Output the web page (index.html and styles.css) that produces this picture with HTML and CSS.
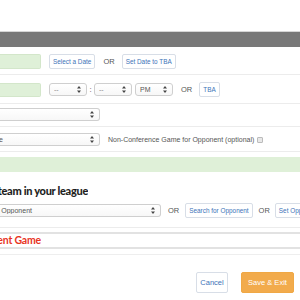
FILE: index.html
```html
<!DOCTYPE html>
<html>
<head>
<meta charset="utf-8">
<link rel="stylesheet" href="styles.css">
</head>
<body>
<div class="page">
  <div class="topbar"></div>

  <div class="row row-date">
    <div class="input green"></div>
    <button class="btn btn-first">Select a Date</button>
    <span class="or">OR</span>
    <button class="btn">Set Date to TBA</button>
  </div>

  <div class="row row-time">
    <div class="input green"></div>
    <div class="select s-time s-first"><span class="val muted">--</span><svg class="arr" width="4" height="7" viewBox="0 0 4 7"><path d="M2 0L4 2.6H0Z M2 7L4 4.4H0Z" fill="#444"/></svg></div>
    <span class="colon">:</span>
    <div class="select s-time"><span class="val muted">--</span><svg class="arr" width="4" height="7" viewBox="0 0 4 7"><path d="M2 0L4 2.6H0Z M2 7L4 4.4H0Z" fill="#444"/></svg></div>
    <div class="select s-time s-gap"><span class="val">PM</span><svg class="arr" width="4" height="7" viewBox="0 0 4 7"><path d="M2 0L4 2.6H0Z M2 7L4 4.4H0Z" fill="#444"/></svg></div>
    <span class="or">OR</span>
    <button class="btn">TBA</button>
  </div>

  <div class="row row-loc">
    <div class="select s-wide"><span class="val"></span><svg class="arr" width="4" height="7" viewBox="0 0 4 7"><path d="M2 0L4 2.6H0Z M2 7L4 4.4H0Z" fill="#444"/></svg></div>
  </div>

  <div class="row row-home">
    <div class="select s-wide"><span class="val cut"><span class="cut-home">Home</span></span><svg class="arr" width="4" height="7" viewBox="0 0 4 7"><path d="M2 0L4 2.6H0Z M2 7L4 4.4H0Z" fill="#444"/></svg></div>
    <span class="note">Non-Conference Game for Opponent (optional)</span>
    <span class="checkbox"></span>
  </div>

  <div class="notice"></div>

  <h3 class="league-title"><span>Opponent is a team in your league</span></h3>

  <div class="row-opp">
    <div class="select s-opp"><span class="val cut"><span class="cut-opp">Select Opponent</span></span><svg class="arr" width="4" height="7" viewBox="0 0 4 7"><path d="M2 0L4 2.6H0Z M2 7L4 4.4H0Z" fill="#444"/></svg></div>
    <span class="or">OR</span>
    <button class="btn">Search for Opponent</button>
    <span class="or or-wide">OR</span>
    <button class="btn">Set Opponent to TBA</button>
  </div>

  <div class="nonleague">
    <div class="red-title"><span>Add Non-League Opponent Game</span></div>
  </div>

  <div class="actions">
    <button class="btn btn-lg btn-cancel">Cancel</button>
    <button class="btn btn-lg btn-save">Save &amp; Exit</button>
  </div>
</div>
</body>
</html>
```

FILE: styles.css
```css
* { box-sizing: border-box; }
html, body { margin: 0; padding: 0; background: #fff; }
body { width: 300px; height: 300px; overflow: hidden; font-family: "Liberation Sans", Arial, sans-serif; font-size: 7px; color: #444; }

.page { width: 300px; }

.topbar {
  margin-top: 31px;
  height: 16px;
  background: #787878;
  border-top: 1px solid #d6d6d6;
}

.row {
  display: flex;
  align-items: center;
  border-bottom: 1px solid #ececec;
}
.row-date { padding: 7px 0 5px; height: 28px; }
.row-time { padding: 7px 0 6px; height: 29px; }
.row-loc { padding: 4px 0 5px; height: 23px; }
.row-home { padding: 6px 0 5px; height: 25px; }

.input {
  width: 41px;
  height: 15px;
  border: 1px solid #d3e6ca;
  border-left: none;
  border-radius: 0 2px 2px 0;
}
.green { background: #dff0d8; }
.row-time .input { height: 14px; }

.btn {
  font-family: "Liberation Sans", Arial, sans-serif;
  font-size: 6.4px;
  color: #3d73b8;
  background: #fff;
  border: 1px solid #d8dee7;
  border-radius: 2px;
  height: 15px;
  padding: 0 3px;
  margin: 0;
  line-height: 13px;
  white-space: nowrap;
}

.btn-first { margin-left: 8px; }
.or { color: #555; font-size: 7.5px; margin: 0 7px 0 8px; }

.select {
  position: relative;
  display: flex;
  align-items: center;
  height: 13px;
  border: 1px solid #cfcfcf;
  border-radius: 3px;
  background: linear-gradient(#fff, #f7f7f7);
  padding: 0 10px 0 4px;
}
.select .val { flex: 1; overflow: hidden; white-space: nowrap; color: #555; }
.select .muted { color: #888; }
.select .arr { position: absolute; right: 5px; top: 2px; }

.s-time { width: 38px; }
.s-first { margin-left: 8px; }
.s-gap { margin-left: 3px; }
.colon { width: 7px; text-align: center; color: #555; font-size: 8px; }

.s-wide {
  width: 100px;
  border-left: none;
  border-radius: 0 3px 3px 0;
  padding-left: 0;
}
.cut { display: flex; justify-content: flex-end; }
.cut-home { flex: none; margin-right: 86px; }

.note { margin-left: 8px; color: #555; font-size: 7px; white-space: nowrap; }
.checkbox {
  width: 6px; height: 6px;
  margin-left: 3px;
  border: 1px solid #bbb;
  background: #e8e8e8;
  border-radius: 1px;
}

.notice {
  margin-top: 5px;
  height: 15px;
  background: #dff0d8;
}

.league-title {
  margin: 11px 0 0;
  width: 88px;
  height: 15px;
  display: flex;
  justify-content: flex-end;
  overflow: hidden;
  font-family: Lato, "Open Sans", sans-serif;
  font-weight: 900;
  font-size: 11px;
  letter-spacing: -0.3px;
  line-height: 15px;
  color: #1e1e1e;
  white-space: nowrap;
}
.league-title span { flex: none; }

.row-opp {
  display: flex;
  align-items: center;
  margin-top: 5px;
  padding-bottom: 9px;
  border-bottom: 1px solid #ececec;
  white-space: nowrap;
}
.s-opp {
  width: 161px;
  flex: none;
  border-left: none;
  border-radius: 0 3px 3px 0;
  padding-left: 0;
}
.cut-opp { flex: none; margin-right: 118px; }
.row-opp .or { margin: 0 6px 0 7px; }
.row-opp .or-wide { margin: 0 5px 0 6px; }
.row-opp .btn { flex: none; padding: 0 3px; }

.nonleague {
  margin-top: 4px;
  border-top: 2px solid #e2e2e2;
  border-bottom: 2px solid #e2e2e2;
  height: 17px;
  padding-top: 0;
}
.red-title {
  width: 41px;
  display: flex;
  justify-content: flex-end;
  overflow: hidden;
  white-space: nowrap;
  font-family: Lato, "Open Sans", sans-serif;
  font-weight: 700;
  font-size: 10.5px;
  letter-spacing: -0.2px;
  line-height: 12px;
  color: #e8351f;
}
.red-title span { flex: none; }

.actions {
  display: flex;
  justify-content: flex-end;
  margin-top: 5px;
  padding-top: 17px;
  padding-right: 6px;
  border-top: 1px solid #eeeeee;
}
.btn-lg { height: 21px; font-size: 7.5px; line-height: 19px; }
.btn-cancel { width: 32px; padding: 0; }
.btn-save {
  margin-left: 13px;
  width: 53px;
  padding: 0;
  background: #f2ab4c;
  border-color: #f0a845;
  color: #fff;
}
```
